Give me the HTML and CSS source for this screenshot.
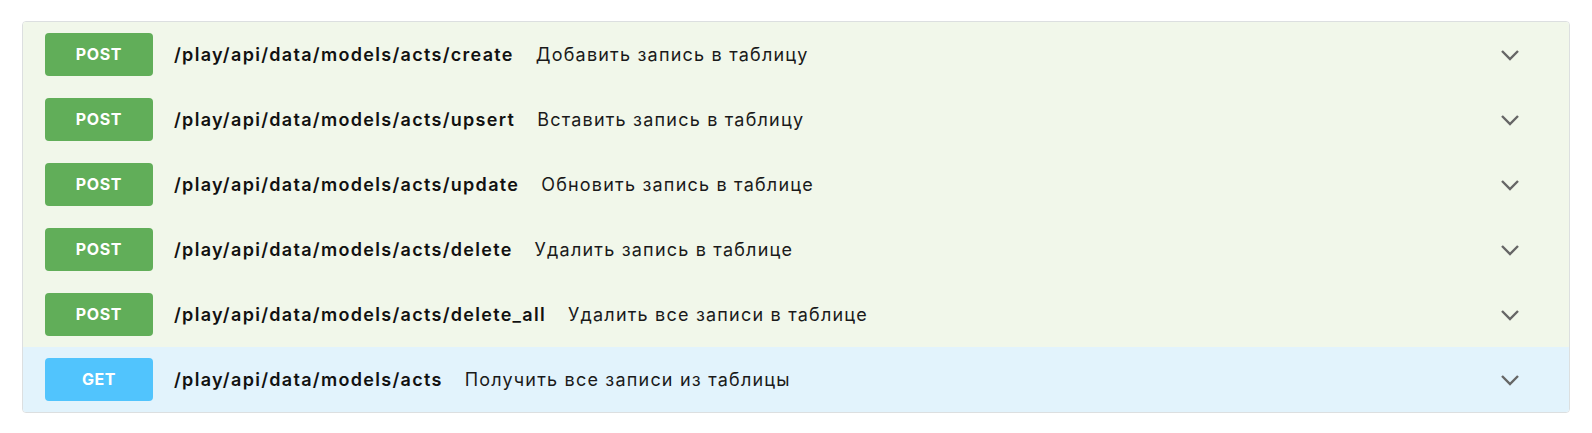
FILE: index.html
```html
<!DOCTYPE html>
<html lang="en">

<head>
    <meta charset="utf-8">
    <link rel="stylesheet" href="styles.css">
</head>

<body>
    <main class="ops">
        <div class="op op-post">
            <span class="method">POST</span>
            <span class="path">/play/api/data/models/acts/create</span>
            <span class="summary">Добавить запись в таблицу</span>
            <svg class="arrow" viewBox="0 0 20 20"><path d="M2 6 L10 14 L18 6" /></svg>
        </div>
        <div class="op op-post">
            <span class="method">POST</span>
            <span class="path">/play/api/data/models/acts/upsert</span>
            <span class="summary">Вставить запись в таблицу</span>
            <svg class="arrow" viewBox="0 0 20 20"><path d="M2 6 L10 14 L18 6" /></svg>
        </div>
        <div class="op op-post">
            <span class="method">POST</span>
            <span class="path">/play/api/data/models/acts/update</span>
            <span class="summary">Обновить запись в таблице</span>
            <svg class="arrow" viewBox="0 0 20 20"><path d="M2 6 L10 14 L18 6" /></svg>
        </div>
        <div class="op op-post">
            <span class="method">POST</span>
            <span class="path">/play/api/data/models/acts/delete</span>
            <span class="summary">Удалить запись в таблице</span>
            <svg class="arrow" viewBox="0 0 20 20"><path d="M2 6 L10 14 L18 6" /></svg>
        </div>
        <div class="op op-post">
            <span class="method">POST</span>
            <span class="path">/play/api/data/models/acts/delete_all</span>
            <span class="summary">Удалить все записи в таблице</span>
            <svg class="arrow" viewBox="0 0 20 20"><path d="M2 6 L10 14 L18 6" /></svg>
        </div>
        <div class="op op-get">
            <span class="method">GET</span>
            <span class="path">/play/api/data/models/acts</span>
            <span class="summary">Получить все записи из таблицы</span>
            <svg class="arrow" viewBox="0 0 20 20"><path d="M2 6 L10 14 L18 6" /></svg>
        </div>
    </main>
</body>

</html>
```

FILE: styles.css
```css
body {
    margin: 0;
    padding: 21px 22px;
    background: #fff;
    font-family: Inter, "Noto Sans", sans-serif;
    color: #111;
}

.ops {
    border: 1px solid #dcdfe0;
    border-radius: 4px;
    overflow: hidden;
}

.op {
    display: flex;
    align-items: center;
    height: 65px;
    padding: 0 49px 0 22px;
}

.op-post {
    background: #f1f7ea;
}

.op-get {
    background: #e2f3fc;
}

.method {
    flex: none;
    width: 108px;
    height: 43px;
    line-height: 43px;
    border-radius: 4px;
    text-align: center;
    color: #fff;
    font-weight: 700;
    font-size: 16px;
    letter-spacing: 0.6px;
}

.op-post .method {
    background: #61ae59;
}

.op-get .method {
    background: #51c4fd;
}

/* text in the reference runs wider than stock Inter, so it gets some tracking */
.path {
    margin-left: 21px;
    font-weight: 600;
    font-size: 18px;
    letter-spacing: 1.3px;
    color: #111;
}

.summary {
    margin-left: 22px;
    font-size: 18px;
    letter-spacing: 1.2px;
    color: #1a1a1a;
    flex: 1;
}

.arrow {
    flex: none;
    width: 20px;
    height: 20px;
    fill: none;
    stroke: #666;
    stroke-width: 2.4;
}
```
